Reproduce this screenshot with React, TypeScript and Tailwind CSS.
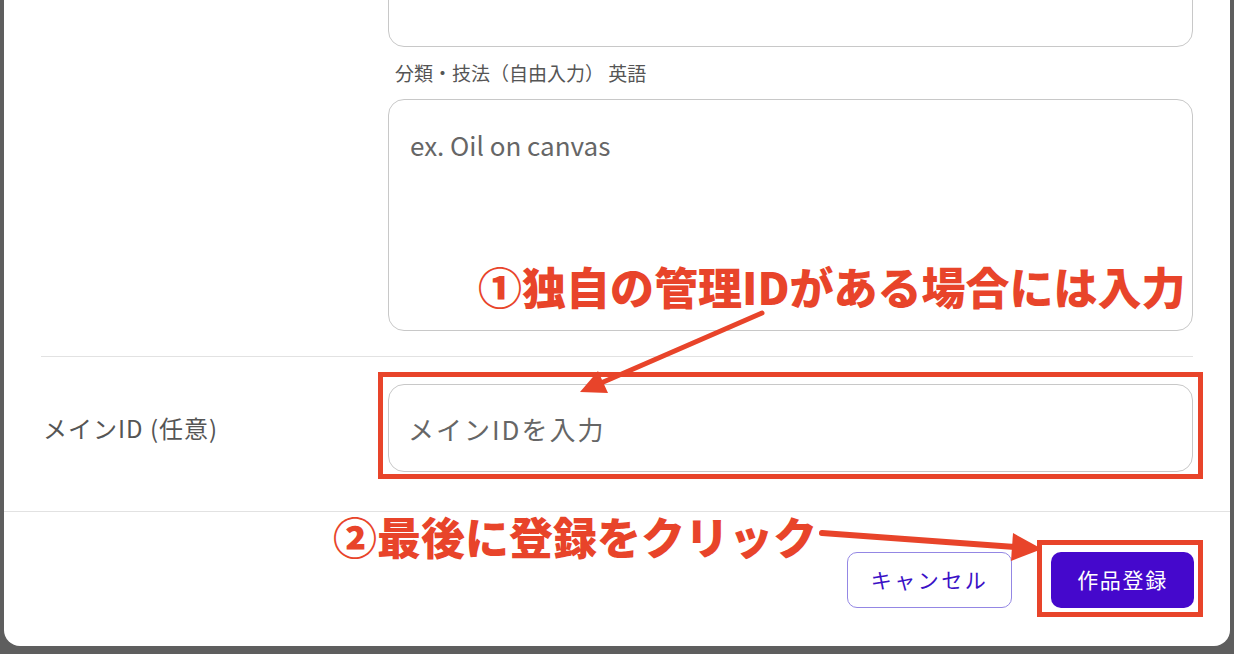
const jp = { fontFamily: '"Noto Sans CJK JP", "Noto Sans", sans-serif' };

function Annotations() {
  return (
    <>
      <div className="pointer-events-none absolute left-[378px] top-[372px] h-[107px] w-[825px] border-[5px] border-[#e8442a]" />
      <div className="pointer-events-none absolute left-[1037px] top-[540px] h-[77px] w-[166px] border-[5px] border-[#e8442a]" />
      <svg className="pointer-events-none absolute left-0 top-0" width="1234" height="654" viewBox="0 0 1234 654">
        <line x1="762" y1="313" x2="601" y2="383" stroke="#e8442a" strokeWidth="5" strokeLinecap="round" />
        <polygon points="580,392 598,371 608,393" fill="#e8442a" />
        <line x1="822" y1="533" x2="1015" y2="547" stroke="#e8442a" strokeWidth="6" strokeLinecap="round" />
        <polygon points="1042,549 1013,533 1011,561" fill="#e8442a" />
      </svg>
      <div
        className="pointer-events-none absolute left-[478px] top-[264px] whitespace-nowrap text-[44px] font-black leading-none text-[#e8442a] [text-shadow:0_0_2px_#fff,0_0_2px_#fff]"
        style={jp}
      >
        ①独自の管理IDがある場合には入力
      </div>
      <div
        className="pointer-events-none absolute left-[333px] top-[514px] whitespace-nowrap text-[44px] font-black leading-none text-[#e8442a] [text-shadow:0_0_2px_#fff,0_0_2px_#fff]"
        style={jp}
      >
        ②最後に登録をクリック
      </div>
    </>
  );
}

export default function App() {
  return (
    <div className="relative h-[654px] w-[1234px] overflow-hidden bg-[#5e5e5e] px-[4px] pb-[8px]" style={jp}>
      <div className="flex h-[646px] w-[1226px] flex-col overflow-hidden rounded-b-[16px] bg-white">
        <div className="px-[37px]">
          <div className="grid grid-cols-[347px_1fr]">
            <div />
            <div className="flex flex-col">
              <div className="-mt-[41px] h-[88px] rounded-[16px] border border-[#c8c8c8]" />
              <p className="mt-[16px] pl-[7px] text-[19px] leading-[20px] text-[#555]">分類・技法（自由入力） 英語</p>
              <div className="mt-[16px] h-[232px] rounded-[16px] border border-[#c8c8c8] px-[21px] pt-[27px]">
                <span className="text-[26px] leading-[36px] text-[#666]">ex. Oil on canvas</span>
              </div>
            </div>
          </div>
          <div className="mt-[25px] border-t border-[#e2e2e2]" />
          <div className="grid grid-cols-[347px_1fr] items-center pb-[39px] pt-[27px]">
            <span className="pl-[2px] text-[24px] tracking-[1px] text-[#555]">メインID (任意)</span>
            <div className="flex h-[88px] items-center rounded-[16px] border border-[#c8c8c8] px-[19px]">
              <span className="text-[26px] tracking-[2px] text-[#666]">メインIDを入力</span>
            </div>
          </div>
        </div>
        <div className="flex flex-1 justify-end gap-[39px] border-t border-[#e2e2e2] pr-[36px] pt-[40px]">
          <button
            type="button"
            className="h-[56px] w-[165px] rounded-[10px] border border-[#9487e4] bg-white text-[21px] tracking-[0.12em] text-[#3a10c6]"
          >
            キャンセル
          </button>
          <button
            type="button"
            className="h-[56px] w-[143px] rounded-[10px] bg-[#4508cc] text-[21px] tracking-[0.08em] text-white"
          >
            作品登録
          </button>
        </div>
      </div>
      <Annotations />
    </div>
  );
}
